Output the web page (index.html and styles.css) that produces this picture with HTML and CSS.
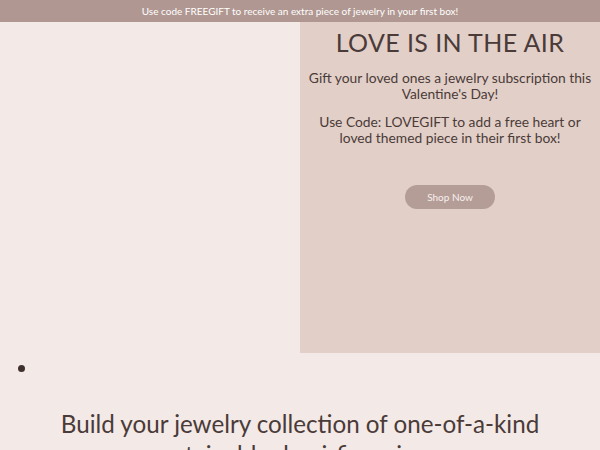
FILE: index.html
```html
<!DOCTYPE html>
<html>
<head>
<meta charset="utf-8">
<link rel="stylesheet" href="styles.css">
</head>
<body>
<div class="announce">Use code FREEGIFT to receive an extra piece of jewelry in your first box!</div>
<section class="hero">
  <div class="hero-left"></div>
  <div class="hero-right">
    <h2 class="hero-title">LOVE IS IN THE AIR</h2>
    <p class="hero-text">Gift your loved ones a jewelry subscription this Valentine's Day!</p>
    <p class="hero-text">Use Code: LOVEGIFT to add a free heart or loved themed piece in their first box!</p>
    <a class="hero-btn" href="#">Shop Now</a>
  </div>
</section>
<ul class="dots"><li></li></ul>
<h1 class="intro">Build your jewelry collection of one-of-a-kind sustainable demi-fine pieces</h1>
</body>
</html>
```
FILE: styles.css
```css
html, body { margin: 0; padding: 0; }
body {
  background: #f3e9e7;
  font-family: Lato, "Open Sans", sans-serif;
  color: #4a3b38;
  overflow: hidden;
  height: 450px;
}
.announce {
  background: #b09791;
  color: #fff;
  font-size: 10px;
  text-align: center;
  height: 22px;
  line-height: 22px;
}
.hero {
  display: flex;
  height: 331px;
}
.hero-left { flex: 0 0 300px; }
.hero-right {
  flex: 0 0 300px;
  box-sizing: border-box;
  background: #e2cfc8;
  display: flex;
  flex-direction: column;
  align-items: center;
  text-align: center;
  padding: 4px 4px 0;
}
.hero-title {
  margin: 0;
  font-weight: 400;
  font-size: 25px;
  line-height: 32px;
  letter-spacing: 0.4px;
  color: #4a3b38;
}
.hero-text {
  margin: 12px 0 0;
  font-size: 13.8px;
  line-height: 16px;
  color: #4a3b38;
}
.hero-text + .hero-text { margin-top: 12px; }
.hero-btn {
  margin-top: 39px;
  width: 90px;
  height: 24px;
  line-height: 24px;
  border-radius: 12px;
  background: #b59d97;
  color: #f7efed;
  font-size: 10px;
  text-decoration: none;
}
.dots {
  margin: 0;
  padding: 8px 0 0 18px;
  height: 30px;
  list-style: none;
}
.dots li {
  width: 7px;
  height: 7px;
  border-radius: 50%;
  background: #3f302d;
  margin-top: 4px;
}
.intro {
  margin: 17px auto 0;
  width: 530px;
  text-align: center;
  font-weight: 400;
  font-size: 24.2px;
  line-height: 31px;
  color: #4a3b38;
}
```
